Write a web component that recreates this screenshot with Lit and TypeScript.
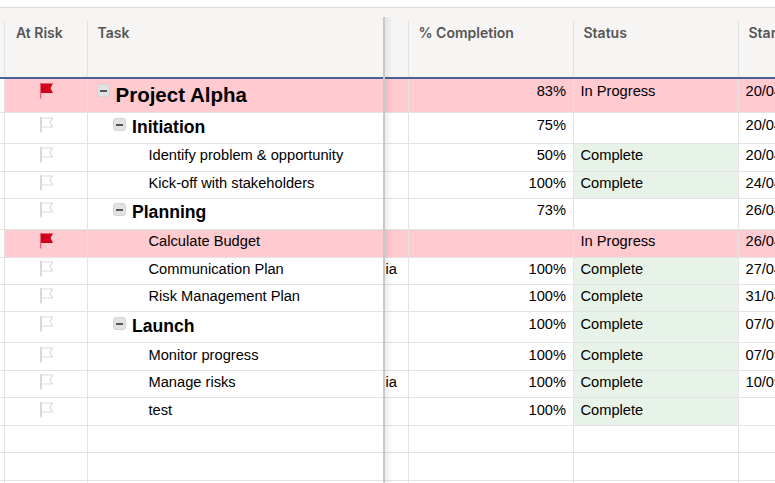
import { LitElement, html, css, svg } from "lit";
import { customElement } from "lit/decorators.js";
import { classMap } from "lit/directives/class-map.js";

interface Row {
  h: number;
  pad: number;
  name: string;
  level?: 0 | 1 | 2;
  risk?: boolean;
  side?: string;
  pct?: string;
  status?: string;
  date?: string;
}

const rows: Row[] = [
  { h: 34, pad: 4, name: "Project Alpha", level: 0, risk: true, pct: "83%", status: "In Progress", date: "20/04/20" },
  { h: 31, pad: 4, name: "Initiation", level: 1, pct: "75%", date: "20/04/20" },
  { h: 28, pad: 3, name: "Identify problem & opportunity", pct: "50%", status: "Complete", date: "20/04/20" },
  { h: 27, pad: 3, name: "Kick-off with stakeholders", pct: "100%", status: "Complete", date: "24/04/20" },
  { h: 31, pad: 3, name: "Planning", level: 1, pct: "73%", date: "26/04/20" },
  { h: 28, pad: 3, name: "Calculate Budget", risk: true, status: "In Progress", date: "26/04/20" },
  { h: 27, pad: 3, name: "Communication Plan", side: "ia", pct: "100%", status: "Complete", date: "27/04/20" },
  { h: 27, pad: 3, name: "Risk Management Plan", pct: "100%", status: "Complete", date: "31/04/20" },
  { h: 31, pad: 4, name: "Launch", level: 1, pct: "100%", status: "Complete", date: "07/09/20" },
  { h: 28, pad: 4, name: "Monitor progress", pct: "100%", status: "Complete", date: "07/09/20" },
  { h: 27, pad: 3, name: "Manage risks", side: "ia", pct: "100%", status: "Complete", date: "10/09/20" },
  { h: 28, pad: 4, name: "test", pct: "100%", status: "Complete" },
  { h: 27, pad: 3, name: "" },
  { h: 28, pad: 3, name: "" },
  { h: 28, pad: 3, name: "" },
];

const flagSolid = svg`<path d="M0.5 0V15.5" stroke="#e8626f" stroke-width="1.6" fill="none"/><path d="M1 0.5H13L10.5 5L13 10H1Z" fill="#d0021b"/>`;
const flagEmpty = svg`<path d="M1 0V15.5" stroke="#d9d9d9" stroke-width="2" fill="none"/><path d="M1 1H12.5L10 5.5L12.5 10H1" stroke="#dcdcdc" stroke-width="1.2" fill="none"/>`;

@customElement("app-root")
export class AppRoot extends LitElement {
  static styles = css`
    :host {
      display: block;
      position: relative;
      width: 775px;
      height: 483px;
      overflow: hidden;
      background: #fff;
      font-family: "Liberation Sans", Arial, sans-serif;
      font-size: 14.67px;
      color: #000;
    }
    .top {
      height: 7px;
      border-bottom: 1px solid #dadada;
    }
    .grid {
      display: grid;
      grid-template-columns: 5px 83px 297px 24px 165px 165px 37px;
    }
    .head {
      height: 69px;
      background: #f6f5f3;
      border-bottom: 2px solid #4a6297;
      box-sizing: content-box;
      font-family: Inter, "Liberation Sans", sans-serif;
      font-size: 14px;
      font-weight: 600;
      color: #555;
    }
    .hcell {
      margin-top: 13px;
      padding: 3px 0 0 9.5px;
      border-right: 1px solid #e3e3e3;
      white-space: nowrap;
      line-height: 17px;
      min-width: 0;
    }
    .hcell.plain { border-right: 0; }
    .hcell.empty { padding: 0; }
    .hcell.risk-col { padding-left: 11px; }
    .row { box-sizing: border-box; border-bottom: 1px solid #e3e3e3; }
    .cell {
      border-right: 1px solid #e3e3e3;
      white-space: nowrap;
      line-height: 17px;
      min-width: 0;
      overflow: hidden;
    }
    .cell.plain { border-right: 0; }
    .risk .fill { background: #ffcad0; }
    .done { background: #e7f3e8; }
    .flag { display: block; width: 14px; height: 16px; margin-left: 35px; }
    .name { display: flex; align-items: flex-start; }
    .toggle {
      flex: none;
      box-sizing: border-box;
      width: 13px;
      height: 13px;
      margin: 1px 6px 0 0;
      border: 1px solid #d2d2d2;
      border-radius: 3px;
      background: #e2e2e2;
      display: flex;
      align-items: center;
      justify-content: center;
    }
    .toggle::before {
      content: "";
      width: 7px;
      height: 2px;
      background: #555;
    }
    .l0 { padding-left: 8.5px; }
    .l1 { padding-left: 25px; }
    .l2 { padding-left: 60.5px; }
    .t0 { font-size: 20.5px; font-weight: 700; line-height: 23px; }
    .t1 { font-size: 17.6px; font-weight: 700; line-height: 21px; }
    .side { padding-left: 0.5px; }
    .pct { text-align: right; padding-right: 7px; }
    .status { padding-left: 6.5px; }
    .date { padding-left: 6.5px; overflow: visible; }
    .divider {
      position: absolute;
      left: 383px;
      top: 17px;
      bottom: 0;
      width: 2px;
      background: #c8c8c8;
    }
    .divider::after {
      content: "";
      position: absolute;
      left: 2px;
      top: 0;
      bottom: 0;
      width: 8px;
      background: linear-gradient(to right, rgba(0, 0, 0, 0.07), rgba(0, 0, 0, 0));
    }
  `;

  private renderRow(r: Row) {
    const level = r.level ?? 2;
    const classes = classMap({ row: true, grid: true, risk: !!r.risk });
    const pad = `padding-top:${r.pad}px`;
    return html`
      <div class=${classes} style="height:${r.h}px">
        <div class="cell"></div>
        <div class="cell fill" style=${pad}>
          ${r.name
            ? html`<svg class="flag" viewBox="0 0 14 16">${r.risk ? flagSolid : flagEmpty}</svg>`
            : ""}
        </div>
        <div class="cell fill name l${level}" style=${pad}>
          ${level < 2 ? html`<span class="toggle"></span>` : ""}
          <span class="t${level}">${r.name}</span>
        </div>
        <div class="cell fill side" style=${pad}>${r.side ?? ""}</div>
        <div class="cell fill pct" style=${pad}>${r.pct ?? ""}</div>
        <div class="cell fill status ${r.status === "Complete" ? "done" : ""}" style=${pad}>${r.status ?? ""}</div>
        <div class="cell plain fill date" style=${pad}>${r.date ?? ""}</div>
      </div>
    `;
  }

  render() {
    return html`
      <div class="top"></div>
      <div class="grid head">
        <div class="hcell empty"></div>
        <div class="hcell risk-col">At Risk</div>
        <div class="hcell plain">Task</div>
        <div class="hcell empty"></div>
        <div class="hcell">% Completion</div>
        <div class="hcell">Status</div>
        <div class="hcell plain">Start Date</div>
      </div>
      ${rows.map((r) => this.renderRow(r))}
      <div class="divider"></div>
    `;
  }
}
